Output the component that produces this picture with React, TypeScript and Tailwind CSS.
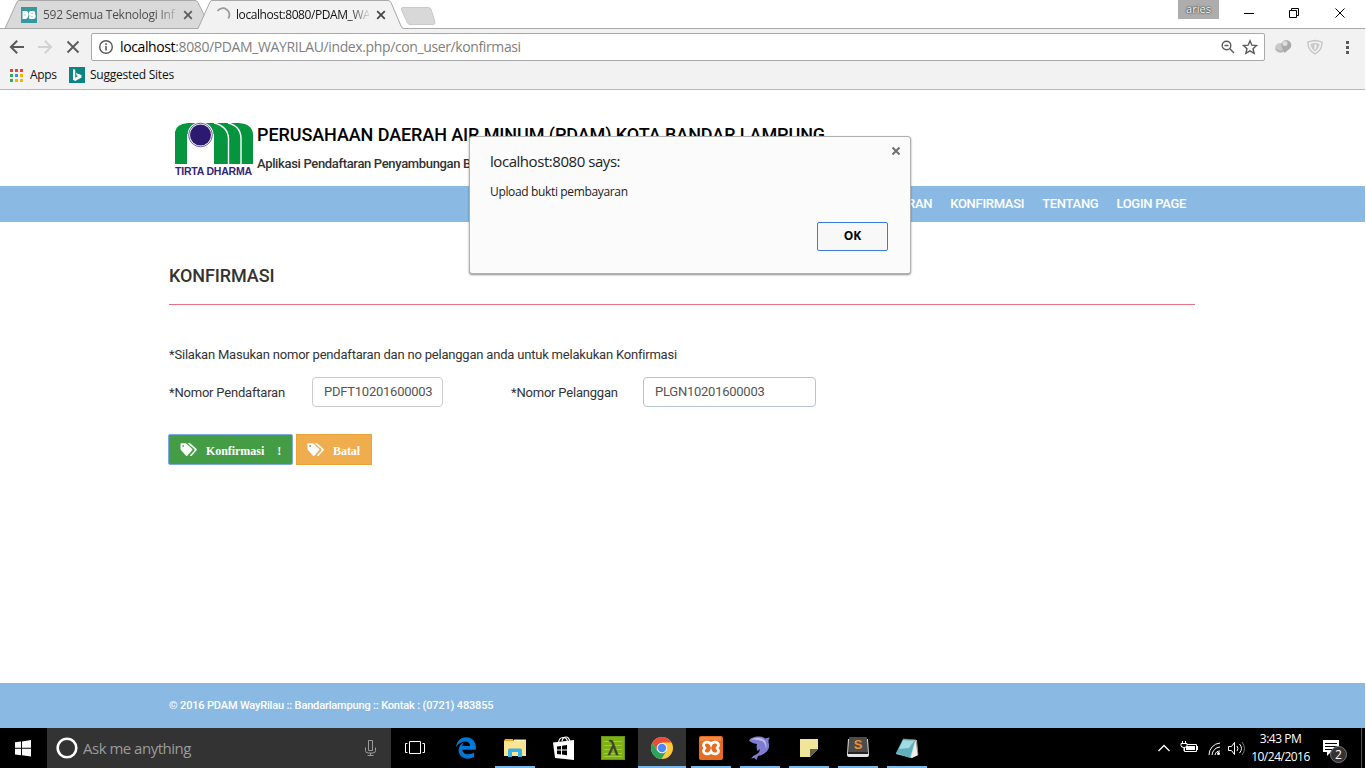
import React from "react";
import { FaEdgeLegacy } from "react-icons/fa";

const UI = "font-['Open_Sans','Noto_Sans',sans-serif]";

function PageTab() {
  return (
    <div className="relative flex h-[29px] w-[198px] items-center pl-[21px]">
      <svg className="absolute left-0 top-0" width="210" height="29" viewBox="0 0 210 29">
        <path d="M5 28.5 L17 2 Q17.6.5 19 .5 H195 Q197 .5 198 2.5 L205 17 L199 28.5Z" fill="#d9d9d9" stroke="#a9a9a9" />
      </svg>
      <svg className="relative shrink-0" width="16" height="16" viewBox="0 0 16 16">
        <rect width="16" height="16" fill="#36979f" />
        <path d="M1.500 4H5Q8 4.500 7.500 8Q7 12 4 12H1.500Z M9 4H12Q15 4 14 7Q16 10 13 12H9Q7 11 8.500 9Q7 6 9 4Z" fill="#fff" />
        <path d="M4 7.500v1M10.500 6.500h1M10.500 9.500h1" stroke="#36979f" strokeWidth=".8" />
      </svg>
      <span className="relative ml-[6px] w-[133px] whitespace-nowrap bg-gradient-to-r from-[#4a4a4a] from-85% to-[#4a4a4a]/20 bg-clip-text text-[12px] tracking-[-0.25px] text-transparent">592 Semua Teknologi Inf</span>
      <CloseX className="relative ml-[7px]" color="#5a5a5a" />
    </div>
  );
}

function CloseX({ className = "", color }: { className?: string; color: string }) {
  return (
    <svg className={`shrink-0 ${className}`} width="10" height="10" viewBox="0 0 10 10">
      <path d="M1.200 1.200 8.800 8.800M8.800 1.200 1.200 8.800" stroke={color} strokeWidth="1.700" />
    </svg>
  );
}

function ActiveTab() {
  return (
    <div className="relative flex h-[29px] w-[202px] items-center pl-[18px]">
      <svg className="absolute left-0 top-0" width="207" height="29" viewBox="0 0 207 29">
        <path d="M0 29 L12 2 Q12.600.5 14 .5 H190 Q192 .5 193 2.500 L203 26 Q204 28.500 206 28.500 V29Z" fill="#f2f2f2" />
        <path d="M0 28.500 L12 2 Q12.600.5 14 .5 H190 Q192 .5 193 2.500 L203 26 Q204 28.500 206 28.500" fill="none" stroke="#a9a9a9" />
      </svg>
      <svg className="relative shrink-0" width="16" height="16" viewBox="0 0 16 16">
        <path d="M1.500 4A6 6 0 0 1 12.200 11.500" fill="none" stroke="#9c9c9c" strokeWidth="1.800" />
      </svg>
      <span className="relative ml-[4px] w-[133px] whitespace-nowrap bg-gradient-to-r from-[#111] from-85% to-[#111]/10 bg-clip-text text-[12px] tracking-[-0.42px] text-transparent">localhost:8080/PDAM_WA</span>
      <CloseX className="relative ml-[7px]" color="#454545" />
    </div>
  );
}

function Browser() {
  return (
    <header className={`${UI} h-[90px] shrink-0 border-b border-[#b6b6b6] bg-[#f2f2f2]`}>
      <div className="flex h-[29px] border-b border-[#a9a9a9] bg-white">
        <PageTab />
        <ActiveTab />
        <svg className="shrink-0" width="38" height="28" viewBox="0 0 38 28">
          <path d="M3 7.500H28Q30 7.500 31 9L35 22Q35.500 24.500 33 24.500H10Q8 24.500 7 22L1.500 10Q.5 7.500 3 7.500Z" fill="#d8d8d8" stroke="#cacaca" />
        </svg>
        <div className="ml-auto flex">
          <div className="flex h-[19px] w-[41px] items-center justify-center bg-[#adadad] text-[11px] text-white [text-shadow:0_0_2px_#222,0_0_1px_#333]">aries</div>
          <svg width="146" height="28" viewBox="0 0 146 28" fill="none" stroke="#000">
            <path d="M25 13.500h10M70.500 10.500h7v7h-7zM72.500 10v-1.500h7v7H78M116.500 8.500l9 9M125.500 8.500l-9 9" />
          </svg>
        </div>
      </div>
      <div className="flex h-[36px] items-center">
        <svg className="shrink-0" width="91" height="36" viewBox="0 0 91 36" fill="none" strokeWidth="2">
          <path d="M24 18H11M17.200 11.700 10.900 18 17.200 24.300" stroke="#5a5a5a" />
          <path d="M38 18H51M44.800 11.700 51.100 18 44.800 24.300" stroke="#d2d2d2" />
          <path d="M67.500 12.500 78.500 23.500M78.500 12.500 67.500 23.500" stroke="#5a5a5a" strokeWidth="1.800" />
        </svg>
        <div className="flex h-[28px] w-[1174px] items-center rounded-[2px] border border-[#a9a9a9] bg-white pl-[6px]">
          <svg width="16" height="16" viewBox="0 0 16 16" fill="none" stroke="#5a5a5a">
            <circle cx="8" cy="8" r="6.300" strokeWidth="1.400" />
            <path d="M8 7v4.500M8 4.200v1.700" strokeWidth="1.600" />
          </svg>
          <span className="ml-[6px] whitespace-nowrap pb-[1px] text-[14px] tracking-[-0.38px] text-[#808080]"><span className="text-black">localhost</span>:8080/PDAM_WAYRILAU/index.php/con_user/konfirmasi</span>
          <svg className="ml-auto" width="46" height="26" viewBox="0 0 46 26" fill="none" stroke="#5a5a5a" strokeWidth="1.400">
            <circle cx="8.500" cy="11.500" r="4.300" />
            <path d="M11.600 14.600 16 19M6.500 11.500h4" />
            <path d="M32 6.800 33.900 11.200 38.500 11.600 35 14.700 36.100 19.300 32 16.900 27.900 19.300 29 14.700 25.500 11.600 30.100 11.200Z" />
          </svg>
        </div>
        <svg className="shrink-0" width="100" height="36" viewBox="0 0 100 36">
          <ellipse cx="15.500" cy="19" rx="5.500" ry="5" fill="#c9c9c9" />
          <path d="M11 20q4 4 9 1" stroke="#a5a5a5" fill="none" />
          <path d="M16.500 17.500A5 5 0 1 1 25 19.500L19.500 24Z" fill="#aaa" />
          <circle cx="20" cy="14.500" r="2.500" fill="#dedede" />
          <path d="M50 11.500Q54 12 57 13Q57.500 21 50 25Q42.500 21 43 13Q46 12 50 11.500Z" fill="#f2f2f2" stroke="#c3c3c3" strokeWidth="1.300" />
          <path d="M50 14Q52.500 14 54.500 15Q54 20 50 22.500Q46 20 45.500 15Q47.500 14 50 14Z" fill="#c8c8c8" />
          <path d="M49.500 15v6q2-1 2-5Z" fill="#f5f5f5" />
          <path d="M81 12h3v3h-3zM81 17h3v3h-3zM81 22h3v3h-3z" fill="#5a5a5a" />
        </svg>
      </div>
      <div className="flex h-[20px] items-center text-[12px] text-[#111]">
        <svg className="ml-[10px]" width="13" height="13" viewBox="0 0 13 13">
          <path d="M0 0h3v3H0zM5 0h3v3H5zM10 0h3v3h-3z" fill="#ee4035" />
          <path d="M0 5h3v3H0zM0 10h3v3H0z" fill="#34a853" />
          <path d="M5 5h3v3H5z" fill="#4285f4" />
          <path d="M10 5h3v3h-3zM5 10h3v3H5zM10 10h3v3h-3z" fill="#f4b400" />
        </svg>
        <span className="ml-[7px] w-[39px] tracking-[-0.3px]">Apps</span>
        <svg width="16" height="16" viewBox="0 0 16 16">
          <rect width="16" height="16" fill="#0c8484" />
          <path d="M4 2 6.200 2.800V10.800L9.200 9.100 7.700 8.400 6.800 6 12.500 8V10.500L6.200 14 4 12.800Z" fill="#fff" />
        </svg>
        <span className="ml-[5px] whitespace-nowrap tracking-[-0.22px]">Suggested Sites</span>
      </div>
    </header>
  );
}

function Logo() {
  return (
    <svg width="80" height="56" viewBox="0 0 80 56">
      <path d="M1 42V10Q2 2 14 1H65Q78 2 79 12V42H40V12H13V42Z" fill="#05953f" />
      <path d="M13 42V18L26 21 40 18V42Z" fill="#fff" />
      <path d="M40 1Q53.500 4 54.500 16V42M54 1Q66.500 4 67 16V42" fill="none" stroke="#fff" strokeWidth="1.400" />
      <circle cx="26.500" cy="13" r="13" fill="#fff" />
      <circle cx="26.500" cy="13" r="11.800" fill="none" stroke="#2b1a70" strokeWidth=".7" />
      <circle cx="26.500" cy="13" r="10.500" fill="#2b1a70" />
      <text x="1" y="53" fontFamily="Liberation Sans" fontWeight="bold" fontSize="10.500" textLength="77" fill="#33257c">TIRTA DHARMA</text>
    </svg>
  );
}

function Tags() {
  return (
    <svg width="18" height="14" viewBox="0 0 18 14" className="shrink-0">
      <path d="M.5 1Q.5.300 1.200.300H5.500Q6.300.300 6.900.900L12.200 6.100Q12.800 6.700 12.200 7.300L7.300 12.700Q6.700 13.200 6.100 12.700L.9 6.900Q.5 6.400.5 5.800Z" fill="#fff" />
      <circle cx="3.200" cy="3" r=".9" fill="#6cae62" />
      <path d="M7.600.300H9.700Q10.400 .300 11 .900L16.600 6.100Q17.200 6.700 16.600 7.300L11.700 12.700Q10.900 13.400 9.900 12.500L14.200 7.700Q15 6.700 14.200 5.900Z" fill="#fff" />
    </svg>
  );
}

function Site() {
  return (
    <div className="flex h-[638px] flex-col bg-white font-[Roboto,sans-serif] text-[#333]">
      <div className="flex h-[96px] pl-[174px] pt-[32px]">
        <Logo />
        <div className="ml-[3px] whitespace-nowrap">
          <h1 className="h-[26px] text-[18px] font-medium leading-[26px] tracking-[-0.09px] text-black">PERUSAHAAN DAERAH AIR MINUM (PDAM) KOTA BANDAR LAMPUNG</h1>
          <p className="mt-[6px] text-[13px] font-medium leading-[20px] tracking-[-0.34px]">Aplikasi Pendaftaran Penyambungan Baru</p>
        </div>
      </div>
      <nav className="flex h-[36px] items-center justify-end gap-[18px] bg-[#8abae4] pr-[179px] text-[13px] font-medium tracking-[-0.3px] text-white">
        <a>PENDAFTARAN</a>
        <a>KONFIRMASI</a>
        <a>TENTANG</a>
        <a>LOGIN PAGE</a>
      </nav>
      <main className="flex-1 pl-[169px] pr-[170px] text-[13px] tracking-[-0.2px]">
        <h2 className="flex h-[83px] items-center border-b border-[#ea7086] pt-[25px] text-[18px] font-medium tracking-[-0.1px]">KONFIRMASI</h2>
        <p className="mt-[40px] leading-[20px]">*Silakan Masukan nomor pendaftaran dan no pelanggan anda untuk melakukan Konfirmasi</p>
        <div className="mt-[12px] flex items-center">
          <label className="w-[143px] pt-[2px]">*Nomor Pendaftaran</label>
          <div className="flex h-[30px] w-[131px] items-center rounded-[4px] border border-[#ccc] pl-[11px] tracking-[-0.25px] text-[#555]">PDFT10201600003</div>
          <label className="ml-[68px] w-[132px] pt-[2px]">*Nomor Pelanggan</label>
          <div className="flex h-[30px] w-[173px] items-center rounded-[4px] border border-[#b5c5d6] pl-[11px] tracking-[-0.25px] text-[#555]">PLGN10201600003</div>
        </div>
        <div className="ml-[-1px] mt-[27px] flex gap-[3px] font-['Liberation_Serif',serif] text-[12px] font-bold tracking-[-0.05px] text-white">
          <button className="flex h-[31px] w-[125px] items-center rounded-[2px] border border-[#7da9e8] bg-[#449d44] pl-[11px]">
            <Tags />
            <span className="ml-[8px] pt-[2px]">Konfirmasi</span>
            <span className="ml-[13px] pt-[2px]">!</span>
          </button>
          <button className="flex h-[31px] w-[76px] items-center border border-[#eea236] bg-[#f0ad4e] pl-[10px]">
            <Tags />
            <span className="ml-[8px] pt-[2px]">Batal</span>
          </button>
        </div>
      </main>
      <footer className="flex h-[45px] items-center bg-[#8abae4] pl-[169px] pt-[1px] text-[11px] font-medium tracking-[-0.16px] text-white">© 2016 PDAM WayRilau :: Bandarlampung :: Kontak : (0721) 483855</footer>
    </div>
  );
}

function Dialog() {
  return (
    <div className={`${UI} absolute left-[469px] top-[136px] h-[138px] w-[442px] rounded-[3px] border border-[#b0b0b0] bg-[#fbfbfb] pl-[20px] pr-[22px] text-[#222] shadow-[0_1px_2px_rgba(0,0,0,0.45)]`}>
      <div className="flex justify-between pt-[13px]">
        <span className="text-[15px] leading-[22px] tracking-[-0.45px]">localhost:8080 says:</span>
        <svg className="mr-[-13px] mt-[-4px]" width="10" height="10" viewBox="0 0 10 10"><path d="M1.500 1.500l7 7M8.500 1.500l-7 7" stroke="#707070" strokeWidth="2" /></svg>
      </div>
      <p className="mt-[11px] text-[12px] leading-[18px] tracking-[-0.35px]">Upload bukti pembayaran</p>
      <button className="ml-auto mt-[21px] flex h-[29px] w-[71px] items-center justify-center rounded-[2px] border border-[#3b78e7] bg-[#f8f8f8] pb-[2px] text-[12px] font-bold text-black">OK</button>
    </div>
  );
}

function TaskButton({ children, open, active }: { children: React.ReactNode; open?: boolean; active?: boolean }) {
  return (
    <div className={`mr-[1px] flex h-[40px] w-[48px] flex-col items-center ${active ? "bg-[#333]" : ""}`}>
      <div className="flex h-[38px] items-center pt-[2px]">{children}</div>
      {open && <div className={`h-[2px] bg-[#76b9ed] ${active ? "w-full" : "w-[40px]"}`} />}
    </div>
  );
}

function Taskbar() {
  return (
    <footer className={`${UI} flex h-[40px] shrink-0 bg-black`}>
      <div className="flex w-[47px] items-center pl-[15px]">
        <svg width="17" height="17" viewBox="0 0 17 17"><path d="M0 2.300 6 1.500V7.800H0ZM7 1.400 16 0V7.800H7ZM0 8.800H6V15.200L0 14.400ZM7 8.800H16V16.500L7 15.300Z" fill="#fff" /></svg>
      </div>
      <div className="flex w-[344px] items-center bg-[#333] pl-[9px]">
        <svg width="22" height="22" viewBox="0 0 22 22"><circle cx="11" cy="11" r="9.300" fill="none" stroke="#fff" strokeWidth="2.600" /></svg>
        <span className="ml-[5px] text-[15px] tracking-[-0.5px] text-[#9b9b9b]">Ask me anything</span>
        <svg className="ml-auto mr-[14px]" width="13" height="18" viewBox="0 0 13 18" fill="none" stroke="#9b9b9b"><path d="M4.500 1.500h4v10h-4zM1.500 8.500v3q0 2.500 2.500 2.500h5q2.500 0 2.500-2.500v-3M6.500 14v2.500M3.500 16.500h6" /></svg>
      </div>
      <div className="mr-[3px] flex w-[48px] items-center justify-center">
        <svg width="22" height="16" viewBox="0 0 22 16" fill="none" stroke="#fff"><path d="M5.500 1.500h11v12h-11zM3.500 3.500h-2v9h2M18.500 3.500h2v9h-2" /></svg>
      </div>
      <TaskButton><FaEdgeLegacy size={22} color="#0078d7" /></TaskButton>
      <TaskButton open>
        <svg width="22" height="20" viewBox="0 0 22 20">
          <path d="M1 1H9V3H0Z" fill="#e8ac1c" /><path d="M0 3H9L10 1.500H22V18H0Z" fill="#fce493" />
          <path d="M10 2h10v1H10Z" fill="#fff5c5" /><path d="M4 19V12Q4 10.500 5.500 10.500H16.500Q18 10.500 18 12V19H14V14H8V19Z" fill="#35b2e7" />
        </svg>
      </TaskButton>
      <TaskButton>
        <svg width="22" height="24" viewBox="0 0 22 24">
          <path d="M5.500 7Q6 1.500 10 1.500T14.500 6M9 5Q10 1 13 1T17 6" stroke="#fff" strokeWidth="1.200" fill="none" />
          <path d="M0 6.500 21 4V24L2 22Z" fill="#fff" /><path d="M4 10.500 8 10V13.500H4ZM9 9.800 14 9V13.500H9ZM4 14.500H8V18.500L4 18ZM9 14.500H14V19.200L9 18.600Z" fill="#000" />
        </svg>
      </TaskButton>
      <TaskButton>
        <svg width="24" height="24" viewBox="0 0 24 24">
          <rect x=".5" y=".5" width="23" height="23" fill="#7eb116" stroke="#689414" />
          <path d="M3 5.500h18M3 9.500h18M3 13.500h18M3 17.500h18M3 20.500h18" stroke="#a1cc38" />
          <text x="12" y="19" fontFamily="Liberation Sans" fontSize="21" textAnchor="middle" fill="#3d402f" stroke="#3d402f" strokeWidth=".5">λ</text>
        </svg>
      </TaskButton>
      <TaskButton open active>
        <svg width="22" height="22" viewBox="0 0 22 22">
          <circle cx="11" cy="11" r="11" fill="#fdc83e" />
          <path d="M1.500 5.500A11 11 0 0 1 20.500 5.500H11L6.200 13.500Z" fill="#e84c3d" />
          <path d="M1.500 5.500A11 11 0 0 0 10.500 22L15.500 13.800 6.200 13.800Z" fill="#29a65b" />
          <circle cx="11" cy="11" r="5.300" fill="#f5f5f5" /><circle cx="11" cy="11" r="4.200" fill="#4a8af4" />
        </svg>
      </TaskButton>
      <TaskButton open>
        <svg width="24" height="24" viewBox="0 0 24 24">
          <rect width="24" height="24" rx="2" fill="#e86c20" /><path d="M1 2Q1 1 2 1H22V5Q12 3 1 5Z" fill="#f28b49" />
          <path d="M12 8.500C10.500 5 4 5.500 4.500 9.500C4.700 11 6 11.200 6 12C6 12.800 4.700 13 4.500 14.500C4 18.500 10.500 19 12 15.500C13.500 19 20 18.500 19.500 14.500C19.300 13 18 12.800 18 12C18 11.200 19.300 11 19.500 9.500C20 5.500 13.500 5 12 8.500Z" fill="none" stroke="#fff" strokeWidth="2.700" />
        </svg>
      </TaskButton>
      <TaskButton open>
        <svg width="22" height="24" viewBox="0 0 22 24">
          <path d="M0 4Q4 0 10 .5Q14 .5 16 2.500L21 1.500Q18.500 4 20 8Q21 13 16 17Q13 19.500 9 20L7.500 24 5.500 22 2 22.500Q4 19 8 18Q11 16 11 13L8.500 15Q7 12 8 8Q4 7.500 1 5.500Z" fill="#7f7cd0" />
          <path d="M2 3.500Q8 .5 14 3Q18.500 6 17 13Q16.500 7 13 5Q8 3 2 3.500Z" fill="#bdbdf0" />
        </svg>
      </TaskButton>
      <TaskButton open>
        <svg width="18" height="18" viewBox="0 0 18 18"><path d="M0 0H18V10L10 18H0Z" fill="#f1e59a" /><path d="M10 10H18L10 18Z" fill="#65614d" /></svg>
      </TaskButton>
      <TaskButton open>
        <svg width="22" height="22" viewBox="0 0 22 22">
          <path d="M1 2 0 18Q0 20 2 20H20Q22 20 22 18L21 2Z" fill="#e6e6e6" /><path d="M2 1Q2 0 3 0H19Q20 0 20 1L21 16H1Z" fill="#4c4c4c" /><path d="M1 15H21V17H1Z" fill="#252525" />
          <text x="11" y="12" fontFamily="Liberation Sans" fontSize="13" fontWeight="bold" textAnchor="middle" fill="#e8923a">S</text>
        </svg>
      </TaskButton>
      <TaskButton open>
        <svg width="23" height="23" viewBox="0 0 23 23"><path d="M8 2 21 3 22 18 16 21 0 17Z" fill="#c5dde2" /><path d="M7 2 19 4 14 21 0 16Z" fill="#5fafbd" /><path d="M7 3 18 4 13 11 3 12Z" fill="#a1dbe1" /><path d="M20 3 22 18 15 21Z" fill="#efefe8" /><path d="M7 2 20 3 22 18" fill="none" stroke="#87785a" strokeWidth=".8" /></svg>
      </TaskButton>
      <div className="ml-auto flex">
        <svg width="92" height="40" viewBox="0 0 92 40" fill="none" stroke="#fff">
          <path d="M5.500 23 11 17.500 16.500 23" strokeWidth="1.300" />
          <path d="M31.500 16.500h12v7h-12zM44.500 18v4" /><path d="M33 18h9v4h-9z" fill="#fff" stroke="none" /><path d="M28 15.500h6v2q0 2-3 2t-3-2ZM29.500 13v2M32.500 13v2M31 20v3" fill="#000" />
          <path d="M56 27A12 12 0 0 1 67 15M59 27A8.500 8.500 0 0 1 67 19M62 27A5 5 0 0 1 67 23" /><circle cx="65.500" cy="25.500" r="1.500" fill="#fff" stroke="none" />
          <path d="M75.500 18.500h3l3-4v12l-3-4h-3zM84 18q2 2.500 0 5M86.500 16q4 4.500 0 9" /><path d="M89 14q5 6.500 0 13" stroke="#777" />
        </svg>
        <div className="ml-[-1px] w-[73px] pt-[2px] text-center text-[12px] leading-[18px] tracking-[-0.5px] text-white"><div>3:43 PM</div><div>10/24/2016</div></div>
        <svg className="ml-[2px]" width="46" height="40" viewBox="0 0 46 40">
          <path d="M4 12H20V24H12L8 28V24H4Z" fill="#fff" /><path d="M6 15.500h12M6 18.500h12M6 21.500h8" stroke="#000" />
          <circle cx="19.500" cy="26.500" r="8" fill="#333" stroke="#777" />
          <text x="19.500" y="31" fontFamily="Open Sans" fontSize="12" textAnchor="middle" fill="#fff">2</text>
          <path d="M42.500 0V40" stroke="#555" />
        </svg>
      </div>
    </footer>
  );
}

export default function App() {
  return (
    <div className="h-[768px] w-full overflow-hidden bg-white">
      <div className="relative flex h-full w-[1365px] flex-col">
        <Browser />
        <Site />
        <Taskbar />
        <Dialog />
      </div>
    </div>
  );
}
